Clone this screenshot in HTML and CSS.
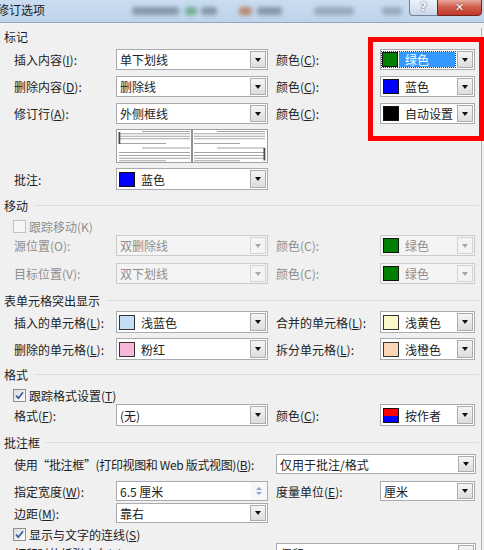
FILE: index.html
```html
<!DOCTYPE html>
<html>
<head>
<meta charset="utf-8">
<link rel="stylesheet" href="styles.css">
</head>
<body>
<div class="titlebar">
  <span class="title">修订选项</span>
  <span class="blob b1"></span>
  <span class="blob b2"></span>
  <span class="blob b3"></span>
  <span class="blob b4"></span>
  <span class="blob b5"></span>
  <span class="blob b6"></span>
  <span class="blob b7"></span>
  <div class="ctl">
    <span class="help">?</span>
    <span class="close">✕</span>
  </div>
</div>

<div class="dialog">
  <div class="hdr noline m5"><span>标记</span></div>

  <div class="row m5">
    <span class="lbl">插入内容(<u>I</u>):</span>
    <div class="dd w1"><span class="val">单下划线</span><span class="btn"><i></i></span></div>
    <span class="lbl2">颜色(<u>C</u>):</span>
    <div class="dd w2"><span class="focus"><span class="sw green"></span><span class="val sel">绿色</span></span><span class="btn"><i></i></span></div>
  </div>

  <div class="row m6">
    <span class="lbl">删除内容(<u>D</u>):</span>
    <div class="dd w1"><span class="val">删除线</span><span class="btn"><i></i></span></div>
    <span class="lbl2">颜色(<u>C</u>):</span>
    <div class="dd w2"><span class="sw blue"></span><span class="val">蓝色</span><span class="btn"><i></i></span></div>
  </div>

  <div class="row m6">
    <span class="lbl">修订行(<u>A</u>):</span>
    <div class="dd w1"><span class="val">外侧框线</span><span class="btn"><i></i></span></div>
    <span class="lbl2">颜色(<u>C</u>):</span>
    <div class="dd w2"><span class="sw black"></span><span class="val">自动设置</span><span class="btn"><i></i></span></div>
  </div>

  <div class="row m5">
    <span class="lbl"></span>
    <svg class="preview" width="152" height="34" viewBox="0 0 152 34">
      <rect x="0.5" y="0.5" width="151" height="33" fill="#ffffff" stroke="#a0a0a0"/>
      <line x1="76" y1="0.5" x2="76" y2="33.5" stroke="#6f6f6f" stroke-width="1.5"/>
      <g stroke="#a4a4a4" stroke-width="1.1">
        <line x1="26" y1="2.5" x2="74" y2="2.5"/>
        <line x1="3" y1="4.8" x2="74" y2="4.8"/>
        <line x1="3" y1="7.3" x2="74" y2="7.3"/>
        <line x1="3" y1="9.7" x2="74" y2="9.7"/>
        <line x1="3" y1="14.5" x2="50" y2="14.5"/>
        <line x1="26" y1="19" x2="74" y2="19"/>
        <line x1="3" y1="23.5" x2="74" y2="23.5"/>
        <line x1="3" y1="26.5" x2="74" y2="26.5"/>
        <line x1="3" y1="29.2" x2="74" y2="29.2"/>
        <line x1="3" y1="31.8" x2="50" y2="31.8"/>
        <line x1="101" y1="2.5" x2="149" y2="2.5"/>
        <line x1="78" y1="4.8" x2="149" y2="4.8"/>
        <line x1="78" y1="7.3" x2="149" y2="7.3"/>
        <line x1="78" y1="9.7" x2="149" y2="9.7"/>
        <line x1="78" y1="14.5" x2="124" y2="14.5"/>
        <line x1="101" y1="19" x2="149" y2="19"/>
        <line x1="78" y1="23.5" x2="149" y2="23.5"/>
        <line x1="78" y1="26.5" x2="149" y2="26.5"/>
        <line x1="78" y1="29.2" x2="149" y2="29.2"/>
        <line x1="78" y1="31.8" x2="124" y2="31.8"/>
      </g>
      <rect x="2.5" y="3" width="1.8" height="12" fill="#4a4a4a"/>
      <rect x="147.5" y="19" width="1.8" height="12.5" fill="#4a4a4a"/>
    </svg>
  </div>

  <div class="row m5">
    <span class="lbl">批注:</span>
    <div class="dd w1 h22"><span class="sw blue"></span><span class="val">蓝色</span><span class="btn"><i></i></span></div>
  </div>

  <div class="hdr m7"><span>移动</span></div>

  <div class="cb dis m5"><span class="box"></span><span>跟踪移动(K)</span></div>

  <div class="row m1">
    <span class="lbl dis">源位置(O):</span>
    <div class="dd w1 dis"><span class="val">双删除线</span><span class="btn"><i></i></span></div>
    <span class="lbl2 dis">颜色(C):</span>
    <div class="dd w2 dis"><span class="sw green"></span><span class="val">绿色</span><span class="btn"><i></i></span></div>
  </div>

  <div class="row m7">
    <span class="lbl dis">目标位置(V):</span>
    <div class="dd w1 dis"><span class="val">双下划线</span><span class="btn"><i></i></span></div>
    <span class="lbl2 dis">颜色(C):</span>
    <div class="dd w2 dis"><span class="sw green"></span><span class="val">绿色</span><span class="btn"><i></i></span></div>
  </div>

  <div class="hdr m8"><span>表单元格突出显示</span></div>

  <div class="row m3">
    <span class="lbl">插入的单元格(<u>L</u>):</span>
    <div class="dd w1 h22"><span class="sw lblue"></span><span class="val">浅蓝色</span><span class="btn"><i></i></span></div>
    <span class="lbl2">合并的单元格(<u>L</u>):</span>
    <div class="dd w2 h22"><span class="sw lyellow"></span><span class="val">浅黄色</span><span class="btn"><i></i></span></div>
  </div>

  <div class="row m5">
    <span class="lbl">删除的单元格(<u>L</u>):</span>
    <div class="dd w1 h22"><span class="sw pink"></span><span class="val">粉红</span><span class="btn"><i></i></span></div>
    <span class="lbl2">拆分单元格(<u>L</u>):</span>
    <div class="dd w2 h22"><span class="sw lorange"></span><span class="val">浅橙色</span><span class="btn"><i></i></span></div>
  </div>

  <div class="hdr m6"><span>格式</span></div>

  <div class="cb m5"><span class="box"><svg width="11" height="11" viewBox="0 0 11 11"><path d="M2 5.6 L4.4 8.2 L9 2.2" fill="none" stroke="#3f5f9f" stroke-width="1.8"/></svg></span><span>跟踪格式设置(<u>T</u>)</span></div>

  <div class="row m1">
    <span class="lbl">格式(<u>F</u>):</span>
    <div class="dd w1 h22"><span class="val">(无)</span><span class="btn"><i></i></span></div>
    <span class="lbl2">颜色(<u>C</u>):</span>
    <div class="dd w2 h22"><span class="sw author"></span><span class="val">按作者</span><span class="btn"><i></i></span></div>
  </div>

  <div class="hdr m8"><span>批注框</span></div>

  <div class="row m4">
    <span class="lbl wide">使用“批注框”(打印视图和 Web 版式视图)(<u>B</u>):</span>
    <div class="dd w3 h20"><span class="val">仅用于批注/格式</span><span class="btn"><i></i></span></div>
  </div>

  <div class="row m7">
    <span class="lbl">指定宽度(<u>W</u>):</span>
    <div class="dd w1 h20 spin"><span class="val">6.5 厘米</span><span class="spinbtn"><b class="up"></b><b class="down"></b></span></div>
    <span class="lbl2">度量单位(<u>E</u>):</span>
    <div class="dd w2 h20"><span class="val">厘米</span><span class="btn"><i></i></span></div>
  </div>

  <div class="row m2">
    <span class="lbl">边距(<u>M</u>):</span>
    <div class="dd w1 h20"><span class="val">靠右</span><span class="btn"><i></i></span></div>
  </div>

  <div class="cb m3"><span class="box"><svg width="11" height="11" viewBox="0 0 11 11"><path d="M2 5.6 L4.4 8.2 L9 2.2" fill="none" stroke="#3f5f9f" stroke-width="1.8"/></svg></span><span>显示与文字的连线(<u>S</u>)</span></div>

  <div class="row m1">
    <span class="lbl wide">打印时的纸张方向(<u>P</u>):</span>
    <div class="dd w3"><span class="val">保留</span><span class="btn"><i></i></span></div>
  </div>
</div>

<div class="redbox"></div>
</body>
</html>
```

FILE: styles.css
```css
* { box-sizing: border-box; margin: 0; padding: 0; }
html, body { width: 484px; height: 550px; overflow: hidden; }
body {
  background: #f0f0f0;
  font-family: "Noto Sans CJK SC", "Microsoft YaHei", sans-serif;
  font-size: 12px;
  color: #222;
  position: relative;
}
u { text-decoration: underline; text-underline-offset: 1px; }

/* title bar */
.titlebar {
  height: 23px;
  display: flex;
  align-items: flex-start;
  background: linear-gradient(#cadcf0, #bed3ea);
  border-bottom: 1px solid #93a9c2;
  overflow: hidden;
}
.title { margin-left: -3px; line-height: 20px; color: #1b1b1b; width: 48px; white-space: nowrap; }
.blob {
  align-self: center;
  height: 8px;
  border-radius: 3px;
  filter: blur(2px);
  opacity: 0.7;
  background: #6d7c8e;
}
.b1 { margin-left: 87px; width: 47px; }
.b2 { margin-left: 6px; width: 12px; background: #4f9d6a; }
.b3 { margin-left: 4px; width: 16px; }
.b4 { margin-left: 22px; width: 13px; background: #b06a3c; }
.b5 { margin-left: 5px; width: 25px; }
.b6 { margin-left: 32px; width: 40px; opacity: 0.5; }
.b7 { margin-left: 28px; width: 20px; opacity: 0.5; }
.ctl { margin-left: auto; margin-right: 2px; display: flex; margin-top: -1px; }
.help {
  width: 28px; height: 17px;
  border: 1px solid #70819b; border-right: none;
  border-radius: 0 0 0 4px;
  background: linear-gradient(#eef3f9, #c9d7e8);
  color: #f4f7fb;
  text-shadow: 0 0 2px #445;
  font-family: "DejaVu Sans", sans-serif;
  font-weight: bold;
  font-size: 12px;
  line-height: 15px;
  text-align: center;
}
.close {
  width: 45px; height: 17px;
  border: 1px solid #6c2520;
  border-radius: 0 0 4px 0;
  background: linear-gradient(#e8a99c, #cf5a48 50%, #c0392b);
  color: #fff;
  font-family: "DejaVu Sans", sans-serif;
  font-weight: bold;
  font-size: 11px;
  line-height: 15px;
  text-align: center;
  text-shadow: 0 0 2px #622;
}

/* dialog body */
.dialog { width: 482px; border-right: 1px solid #b4b4b4; height: 527px; }

.hdr { display: flex; align-items: center; height: 16px; padding-left: 4px; gap: 6px; color: #1e1e1e; }
.hdr span { white-space: nowrap; }
.hdr::after { content: ""; flex: 1; height: 1px; background: #d9dde2; margin-right: 2px; }
.hdr.noline::after { display: none; }

.row { display: flex; align-items: center; padding-left: 14px; }
.lbl { width: 102px; flex: none; white-space: nowrap; }
.lbl.wide { width: 262px; letter-spacing: -0.35px; }
.lbl2 { width: 104px; margin-left: 8px; flex: none; white-space: nowrap; }
.dis { color: #8e8e8e; }

.m1 { margin-top: 1px; }
.m2 { margin-top: 2px; }
.m3 { margin-top: 3px; }
.m4 { margin-top: 4px; }
.m5 { margin-top: 5px; }
.m6 { margin-top: 6px; }
.m7 { margin-top: 7px; }
.m8 { margin-top: 8px; }

/* dropdowns */
.dd {
  height: 21px;
  display: flex;
  align-items: center;
  background: #fff;
  border: 1px solid #a9abaf;
  flex: none;
}
.dd.h22 { height: 22px; }
.dd.h20 { height: 20px; }
.w1 { width: 152px; }
.w2 { width: 95px; }
.w3 { width: 200px; }
.dd .val { flex: 1; padding-left: 3px; line-height: 17px; white-space: nowrap; overflow: hidden; }
.dd .sw + .val { padding-left: 6px; }
.dd .btn {
  width: 16px;
  align-self: stretch;
  margin: 1px;
  border: 1px solid #acacac;
  background: linear-gradient(#f5f5f5, #dddddd);
  display: flex; align-items: center; justify-content: center;
  flex: none;
}
.btn i { width: 0; height: 0; border-left: 3.5px solid transparent; border-right: 3.5px solid transparent; border-top: 4px solid #111; }

.dd.dis { background: #f4f4f4; border-color: #cbcbcb; }
.dd.dis .btn { background: #f4f4f4; border-color: #d4d4d4; }
.dd.dis .btn i { border-top-color: #a8a8a8; }

.focus { display: flex; align-items: center; flex: 1; align-self: stretch; border: 1px dotted #333; margin: 1px 0 1px 0; }
.focus .sw { margin-left: 0; }
.val.sel { background: #3399ff; color: #fff; align-self: stretch; line-height: 15px; margin-left: 1px; padding-left: 5px; }

.sw { width: 16px; height: 15px; margin-left: 2px; border: 1px solid #111; flex: none; }
.green { background: #008000; }
.blue { background: #0000ff; }
.black { background: #000; }
.lblue { background: #c3ddf7; border-color: #333; }
.pink { background: #f7b7d8; border-color: #333; }
.lyellow { background: #fbf8c8; border-color: #333; }
.lorange { background: #fcd6b4; border-color: #333; }
.author { background: linear-gradient(#ff0000 0 55%, #0000ff 55% 100%); }

.spinbtn { width: 16px; align-self: stretch; display: flex; flex-direction: column; align-items: center; justify-content: center; gap: 2px; background: #f7f7f7; }
.spinbtn b { width: 0; height: 0; border-left: 3px solid transparent; border-right: 3px solid transparent; }
.spinbtn .up { border-bottom: 3px solid #8aa6cf; }
.spinbtn .down { border-top: 3px solid #8aa6cf; }

.preview { display: block; flex: none; }

/* checkboxes */
.cb { display: flex; align-items: center; height: 16px; padding-left: 13px; gap: 3px; }
.box {
  width: 13px; height: 13px;
  border: 1px solid #8e8f8f;
  background: linear-gradient(135deg, #d9dbde, #ffffff);
  display: flex; align-items: center; justify-content: center;
}
.cb.dis .box { border-color: #c2c2c2; background: #f6f6f6; }

/* red annotation overlay */
.redbox {
  position: absolute;
  left: 368px; top: 37px;
  width: 116px; height: 104px;
  border: 5px solid #ff0000;
}
```
